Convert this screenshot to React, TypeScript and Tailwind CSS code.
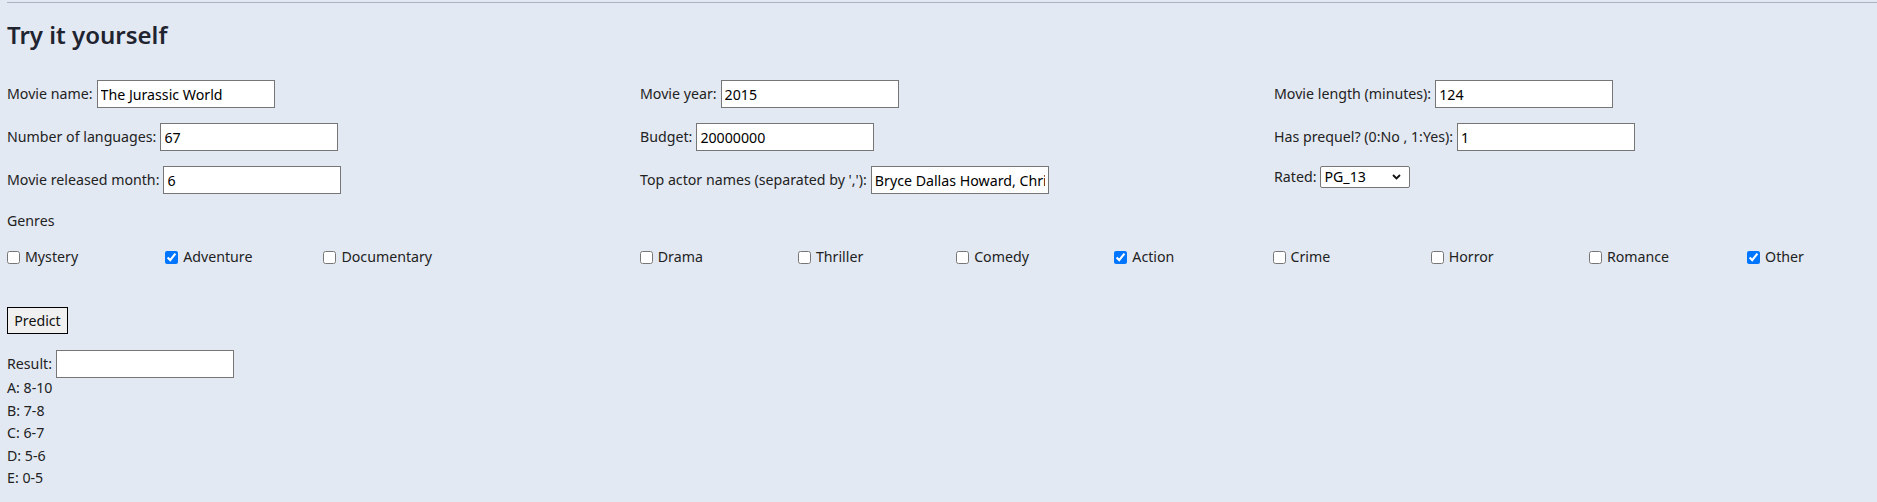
import React from "react";

const fields = [
  [
    { label: "Movie name:", value: "The Jurassic World" },
    { label: "Movie year:", value: "2015" },
    { label: "Movie length (minutes):", value: "124" },
  ],
  [
    { label: "Number of languages:", value: "67" },
    { label: "Budget:", value: "20000000" },
    { label: "Has prequel? (0:No , 1:Yes):", value: "1" },
  ],
];

const genres: (null | { name: string; checked: boolean })[] = [
  { name: "Mystery", checked: false },
  { name: "Adventure", checked: true },
  { name: "Documentary", checked: false },
  null,
  { name: "Drama", checked: false },
  { name: "Thriller", checked: false },
  { name: "Comedy", checked: false },
  { name: "Action", checked: true },
  { name: "Crime", checked: false },
  { name: "Horror", checked: false },
  { name: "Romance", checked: false },
  { name: "Other", checked: true },
];

const grades = ["A: 8-10", "B: 7-8", "C: 6-7", "D: 5-6", "E: 0-5"];

function TextField({ label, value }: { label: string; value: string }) {
  return (
    <div className="flex items-center gap-[4px]">
      <span>{label}</span>
      <input
        className="h-[28px] w-[178px] border border-[#767676] bg-white px-[3px] text-black outline-none"
        defaultValue={value}
      />
    </div>
  );
}

export default function App() {
  return (
    <div className="min-h-[502px] overflow-hidden bg-[#e2e9f3] pl-[7px] font-['Noto_Sans',sans-serif] text-[14.2px] text-[#222]">
      <div className="pt-[2px]">
        <div className="border-t border-[#aab3c0]" />
      </div>

      <h2 className="mt-[16px] text-[24px] font-semibold leading-[32px] text-[#1f2430]">
        Try it yourself
      </h2>

      <div className="mt-[29px] grid grid-cols-[633px_634px_1fr] gap-y-[15px]">
        {fields.flat().map((f) => (
          <TextField key={f.label} label={f.label} value={f.value} />
        ))}
        <TextField label="Movie released month:" value="6" />
        <div className="flex items-center gap-[4px]">
          <span>Top actor names (separated by ','):</span>
          <input
            className="h-[28px] w-[178px] border border-[#767676] bg-white px-[3px] text-black outline-none"
            defaultValue="Bryce Dallas Howard, Chris Pratt"
          />
        </div>
        <div className="flex h-[28px] items-start gap-[4px]">
          <span className="leading-[22px]">Rated:</span>
          <div className="relative">
            <select
              className="h-[22px] w-[90px] appearance-none rounded-[2px] border border-[#767676] bg-white pl-[3px] leading-[20px] text-black outline-none"
              defaultValue="PG_13"
            >
              <option>G</option>
              <option>PG</option>
              <option>PG_13</option>
              <option>R</option>
            </select>
            <svg
              className="pointer-events-none absolute right-[9px] top-[8px]"
              width="9"
              height="6"
              viewBox="0 0 9 6"
            >
              <path d="M1 1l3.5 3.5L8 1" fill="none" stroke="#111" strokeWidth="1.8" />
            </svg>
          </div>
        </div>
      </div>

      <div className="mt-[16px] leading-[22px]">Genres</div>

      <div className="mt-[14px] grid grid-cols-[repeat(11,158.2px)_1fr] leading-[22px]">
        {genres.map((g, i) =>
          g ? (
            <label key={g.name} className="flex items-center">
              <input
                type="checkbox"
                defaultChecked={g.checked}
                className="m-0 mr-[5px] h-[13px] w-[13px]"
              />
              <span>{g.name}</span>
            </label>
          ) : (
            <div key={i} />
          )
        )}
      </div>

      <button className="mt-[39px] h-[27px] w-[61px] border border-black bg-[#f0f0f0] text-center leading-[25px] text-[#111]">
        Predict
      </button>

      <div className="mt-[16px] flex items-center gap-[4px]">
        <span>Result:</span>
        <input className="h-[28px] w-[178px] border border-[#767676] bg-white px-[3px] outline-none" />
      </div>

      <div className="-mt-[1px] leading-[22.5px]">
        {grades.map((g) => (
          <div key={g}>{g}</div>
        ))}
      </div>
    </div>
  );
}
